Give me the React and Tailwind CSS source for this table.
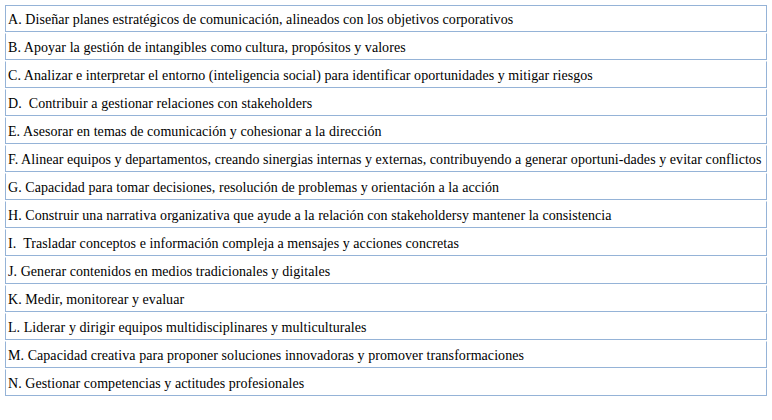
const items = [
  'A. Diseñar planes estratégicos de comunicación, alineados con los objetivos corporativos',
  'B. Apoyar la gestión de intangibles como cultura, propósitos y valores',
  'C. Analizar e interpretar el entorno (inteligencia social) para identificar oportunidades y mitigar riesgos',
  'D.  Contribuir a gestionar relaciones con stakeholders',
  'E. Asesorar en temas de comunicación y cohesionar a la dirección',
  'F. Alinear equipos y departamentos, creando sinergias internas y externas, contribuyendo a generar oportuni-dades y evitar conflictos',
  'G. Capacidad para tomar decisiones, resolución de problemas y orientación a la acción',
  'H. Construir una narrativa organizativa que ayude a la relación con stakeholdersy mantener la consistencia',
  'I.  Trasladar conceptos e información compleja a mensajes y acciones concretas',
  'J. Generar contenidos en medios tradicionales y digitales',
  'K. Medir, monitorear y evaluar',
  'L. Liderar y dirigir equipos multidisciplinares y multiculturales',
  'M. Capacidad creativa para proponer soluciones innovadoras y promover transformaciones',
  'N. Gestionar competencias y actitudes profesionales',
]

export default function App() {
  return (
    <div className="font-[family-name:Liberation_Serif] w-[772px] h-[420px] bg-white pt-[5px] pl-[5px] text-[14px] tracking-[0.06px] text-black">
      <div className="flex w-[762px] flex-col gap-[1px]">
        {items.map((text, i) => (
          <div
            key={i}
            className={`flex h-[27px] items-center whitespace-pre border-x border-b border-[#95b3d7] pl-[2px] pt-[1px] ${
              i === 0 ? 'border-t' : 'border-t border-t-transparent'
            }`}
          >
            {text}
          </div>
        ))}
      </div>
    </div>
  )
}
